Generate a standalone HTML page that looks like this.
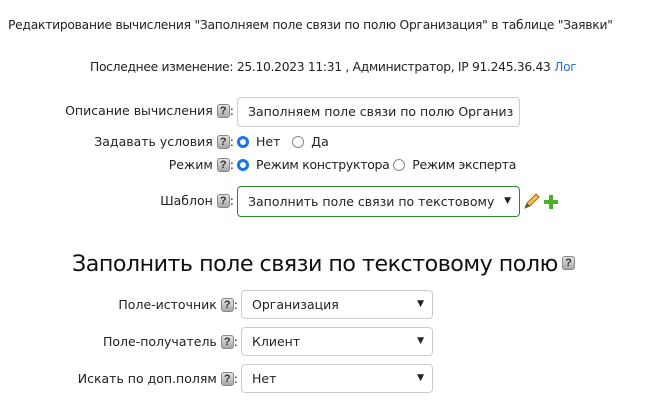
<!DOCTYPE html>
<html><head><meta charset="utf-8"><style>
body{margin:0;width:666px;height:402px;background:#fff;font-family:"DejaVu Sans","Liberation Sans",sans-serif;color:#222;position:relative;overflow:hidden}
.a{position:absolute;white-space:nowrap}
.q{display:inline-block;width:13px;height:14px;border-radius:3px;background:linear-gradient(#e4e4e4,#a8a8a8);border:1px solid #888;box-sizing:border-box;color:#333;font:bold 11px/12px "Liberation Sans",sans-serif;text-align:center;vertical-align:middle;position:relative;top:-1px}
.lab{font-size:12.5px;text-align:right}
.box{position:absolute;border:1px solid #ccc;border-radius:4px;box-sizing:border-box;font-size:12.5px;padding-left:10px;overflow:hidden;white-space:nowrap}
.box .t{display:block;overflow:hidden;margin-right:24px}
.arr{position:absolute;right:8px;top:0;font-size:9px}
.r{display:inline-block;width:12px;height:12px;border-radius:50%;border:1px solid #888;box-sizing:border-box;vertical-align:-2px;margin:0 7px 0 0}
.r.on{border:3px solid #1a73e8;background:#fff}
</style></head><body>
<div class="a" style="left:8px;top:18px;font-size:12.3px;letter-spacing:-0.25px">Редактирование вычисления "Заполняем поле связи по полю Организация" в таблице "Заявки"</div>
<div class="a" style="left:90px;top:60px;font-size:12.3px;letter-spacing:-0.3px">Последнее изменение: 25.10.2023 11:31 , Администратор, IP 91.245.36.43 <span style="color:#2a6fc9">Лог</span></div>

<div class="a lab" style="right:432px;top:103px">Описание вычисления <span class="q">?</span>:</div>
<div class="box" style="left:237px;top:97px;width:283px;height:30px;line-height:28px"><span class="t" style="margin-right:6px">Заполняем поле связи по полю Организац</span></div>

<div class="a lab" style="right:432px;top:134px">Задавать условия <span class="q">?</span>:</div>
<div class="a" style="left:237px;top:134px;font-size:12.5px"><span class="r on"></span>Нет &nbsp;&nbsp;<span class="r"></span>Да</div>

<div class="a lab" style="right:432px;top:157px">Режим <span class="q">?</span>:</div>
<div class="a" style="left:237px;top:157px;font-size:12.5px;letter-spacing:-0.3px"><span class="r on"></span>Режим конструктора <span class="r"></span>Режим эксперта</div>

<div class="a lab" style="right:432px;top:193px">Шаблон <span class="q">?</span>:</div>
<div class="box" style="left:237px;top:186px;width:283px;height:31px;line-height:29px;border-color:#2a8a2a"><span class="t">Заполнить поле связи по текстовому пол</span><span class="arr">▼</span></div>
<svg class="a" style="left:523px;top:192px" width="36" height="18"><path d="M2 16 L4 11 L13 2 L16 5 L7 14 Z" fill="#f5c242" stroke="#a07020"/><path d="M2 16 L4 11 L7 14Z" fill="#555"/><path d="M26 3h4v5h5v4h-5v5h-4v-5h-5v-4h5z" fill="#4caf2a"/></svg>

<div class="a" style="left:72px;top:251px;font-size:22.2px;letter-spacing:-0.5px;color:#111">Заполнить поле связи по текстовому полю<span class="q" style="margin-left:4px;top:-2px">?</span></div>

<div class="a lab" style="right:428px;top:297px">Поле-источник <span class="q">?</span>:</div>
<div class="box" style="left:241px;top:290px;width:192px;height:29px;line-height:27px"><span class="t">Организация</span><span class="arr">▼</span></div>
<div class="a lab" style="right:428px;top:334px">Поле-получатель <span class="q">?</span>:</div>
<div class="box" style="left:241px;top:327px;width:192px;height:29px;line-height:27px"><span class="t">Клиент</span><span class="arr">▼</span></div>
<div class="a lab" style="right:428px;top:371px">Искать по доп.полям <span class="q">?</span>:</div>
<div class="box" style="left:241px;top:364px;width:192px;height:29px;line-height:27px"><span class="t">Нет</span><span class="arr">▼</span></div>
</body></html>
